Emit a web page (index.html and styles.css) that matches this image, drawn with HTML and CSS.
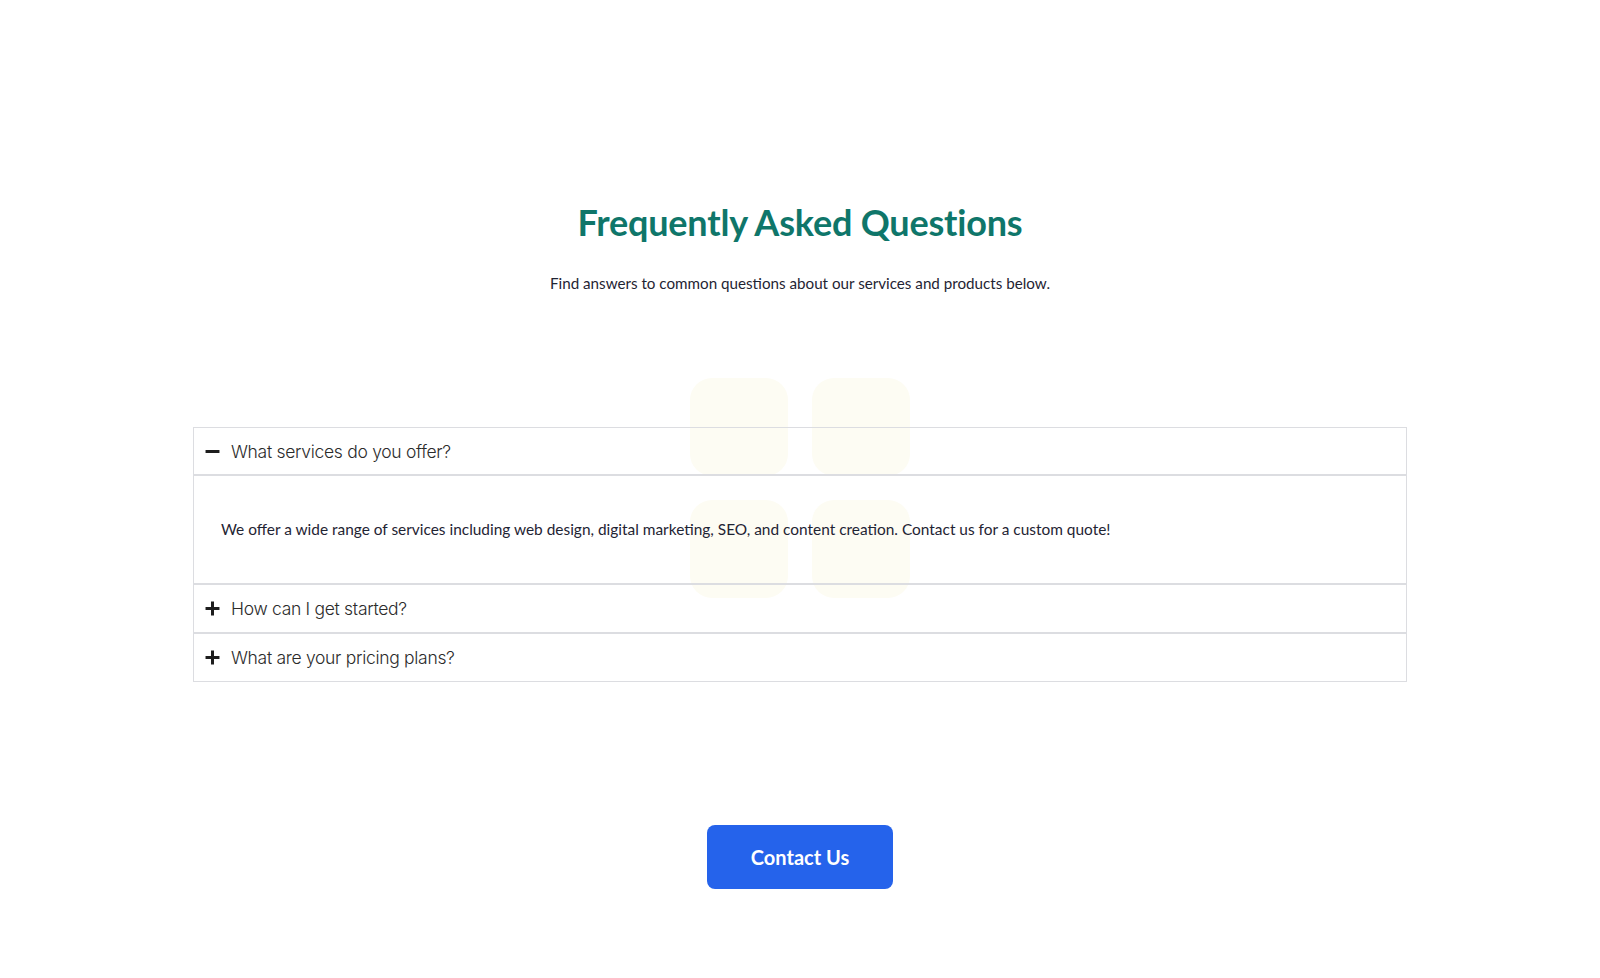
FILE: index.html
```html
<!DOCTYPE html>
<html lang="en">
<head>
<meta charset="utf-8">
<title>FAQ</title>
<link rel="stylesheet" href="styles.css">
</head>
<body>
<main class="page">
  <header class="intro">
    <h1 class="title">Frequently Asked Questions</h1>
    <p class="subtitle">Find answers to common questions about our services and products below.</p>
  </header>

  <section class="faq">
    <div class="decor" aria-hidden="true">
      <span class="tile"></span><span class="tile"></span>
      <span class="tile"></span><span class="tile"></span>
    </div>

    <div class="item open">
      <div class="question">
        <svg class="icon" viewBox="0 0 14 14"><path d="M0.5 7h13" /></svg>
        <span>What services do you offer?</span>
      </div>
      <div class="answer">
        <p>We offer a wide range of services including web design, digital marketing, SEO, and content creation. Contact us for a custom quote!</p>
      </div>
    </div>

    <div class="item">
      <div class="question">
        <svg class="icon" viewBox="0 0 14 14"><path d="M0.5 7h13M7 0.5v13" /></svg>
        <span>How can I get started?</span>
      </div>
    </div>

    <div class="item">
      <div class="question">
        <svg class="icon" viewBox="0 0 14 14"><path d="M0.5 7h13M7 0.5v13" /></svg>
        <span>What are your pricing plans?</span>
      </div>
    </div>
  </section>

  <div class="cta">
    <button class="button" type="button">Contact Us</button>
  </div>
</main>
</body>
</html>
```

FILE: styles.css
```css
* { box-sizing: border-box; }

html, body {
  margin: 0;
  padding: 0;
  background: #ffffff;
}

body {
  font-family: "Lato", "Liberation Sans", sans-serif;
  color: #1f2433;
}

.page {
  display: flex;
  flex-direction: column;
  align-items: center;
  padding-top: 200px;
}

.intro {
  text-align: center;
}

.title {
  margin: 0;
  font-size: 36px;
  line-height: 44px;
  font-weight: 700;
  color: #0f766a;
  letter-spacing: -0.2px;
}

.subtitle {
  margin: 28px 0 0;
  font-size: 15.2px;
  line-height: 22px;
  color: #1f2433;
}

.faq {
  position: relative;
  width: 1214px;
  margin-top: 133px;
}

.decor {
  position: absolute;
  left: 497px;
  top: -49px;
  display: grid;
  grid-template-columns: 98px 98px;
  grid-auto-rows: 98px;
  gap: 24px;
  z-index: 0;
}

.tile {
  background: #fdfcf3;
  border-radius: 22px;
}

.item {
  position: relative;
  z-index: 1;
  border: 1px solid #dcdde1;
}

.question {
  display: flex;
  align-items: center;
  gap: 11px;
  height: 47px;
  padding: 0 11px;
  font-family: "Inter", "Liberation Sans", sans-serif;
  font-weight: 300;
  font-size: 17.5px;
  color: #2b2b2b;
  letter-spacing: -0.3px;
}

.icon {
  width: 15px;
  height: 15px;
  flex: none;
  fill: none;
  stroke: #1d1d1d;
  stroke-width: 2.8;
}

.item.open .question {
  border-bottom: 1px solid #dcdde1;
}

.answer {
  border-top: 1px solid #dcdde1;
  padding: 41px 27px 42px;
}

.answer p {
  margin: 0;
  font-size: 15.43px;
  line-height: 24px;
  color: #1f2433;
}

.cta {
  margin-top: 143px;
}

.button {
  width: 186px;
  height: 64px;
  border: none;
  border-radius: 8px;
  background: #2563eb;
  color: #ffffff;
  font-family: "Lato", "Liberation Sans", sans-serif;
  font-weight: 700;
  font-size: 20px;
  cursor: pointer;
}
```
